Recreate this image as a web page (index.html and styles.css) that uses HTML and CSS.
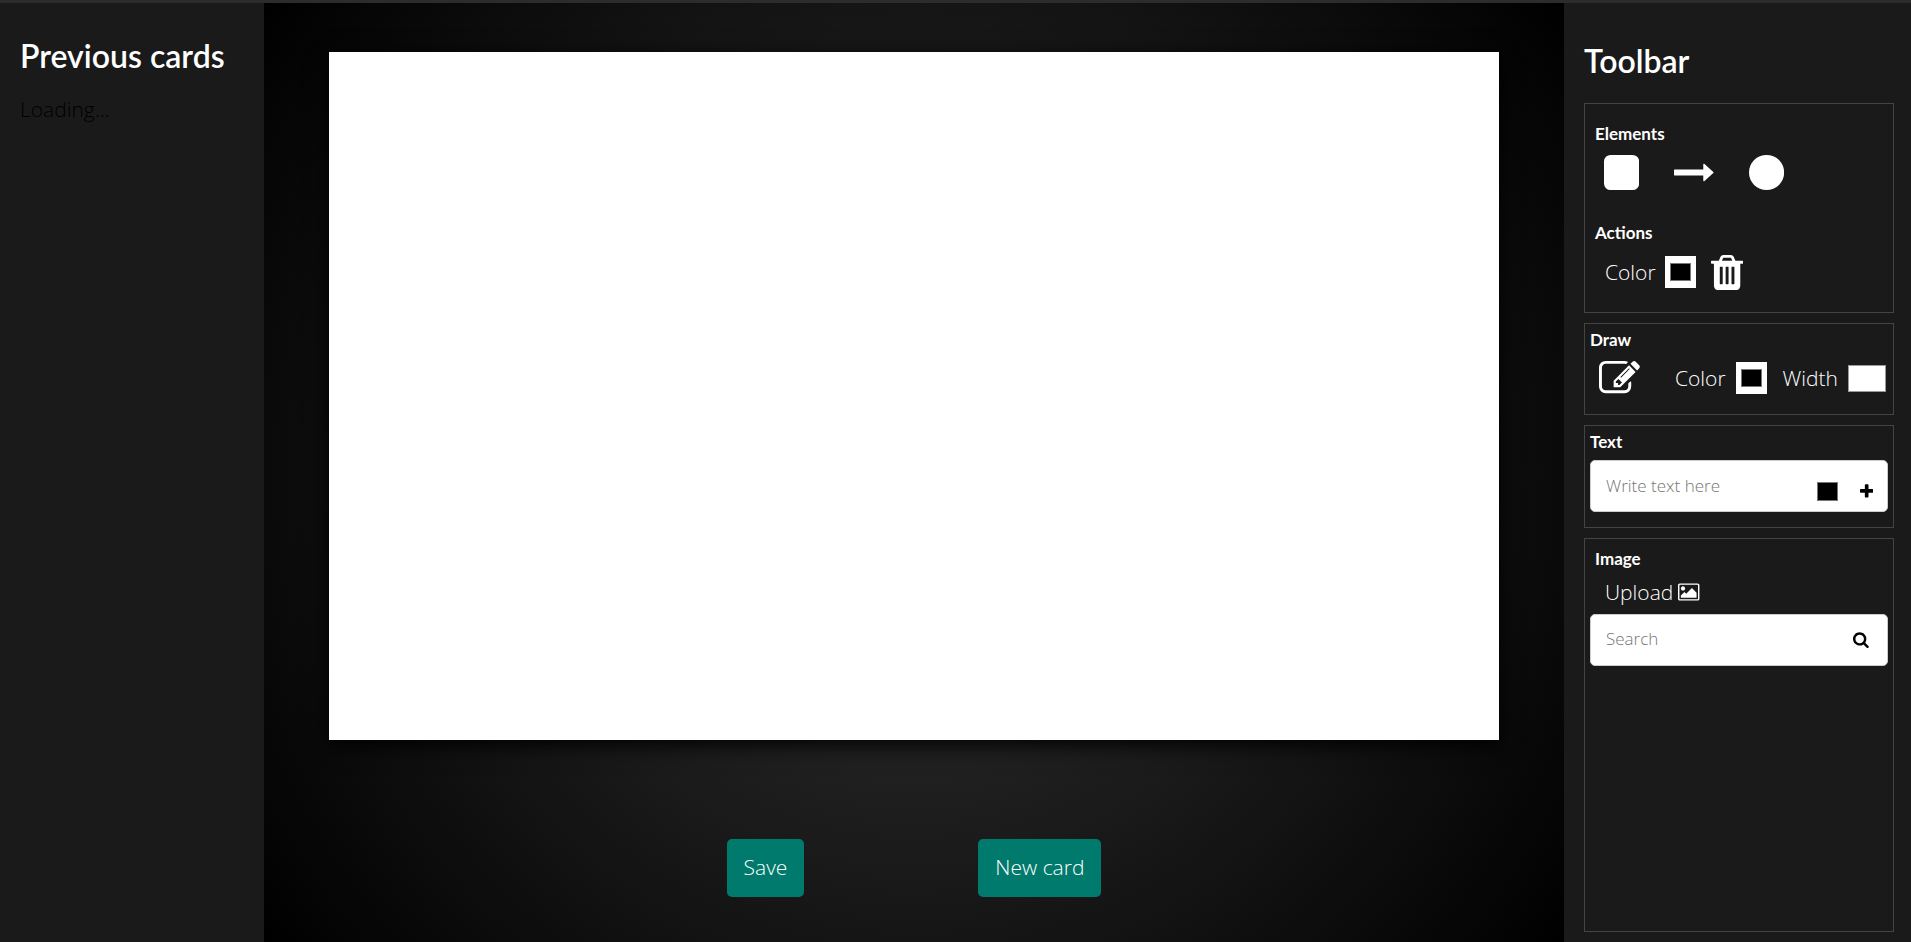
FILE: index.html
```
<!DOCTYPE html>
<html lang="en">
<head>
<meta charset="utf-8">
<title>Card editor</title>
<link rel="stylesheet" href="styles.css">
</head>
<body>
<div class="app">
  <aside class="previous">
    <h1 class="title">Previous cards</h1>
    <p class="loading">Loading...</p>
  </aside>

  <main class="stage">
    <canvas class="card"></canvas>
    <div class="stage-actions">
      <button class="btn" type="button">Save</button>
      <button class="btn" type="button">New card</button>
    </div>
  </main>

  <aside class="toolbar">
    <h1 class="title">Toolbar</h1>

    <section class="group group-elements">
      <h2 class="subtitle">Elements</h2>
      <div class="row row-elements">
        <button class="icon-btn" type="button" aria-label="Rectangle"><svg class="icon icon-lg" viewBox="128 0 1536 1792"><path d="M1664 416v960q0 119-84.500 203.500t-203.500 84.500h-960q-119 0-203.500-84.500t-84.500-203.500v-960q0-119 84.500-203.500t203.500-84.500h960q119 0 203.500 84.500t84.500 203.500z"/></svg></button>
        <button class="icon-btn" type="button" aria-label="Arrow"><svg class="icon icon-lg" viewBox="0 0 1728 1792"><path d="M1728 893q0 14-10 24l-384 354q-16 14-35 6-19-9-19-29v-224h-1248q-14 0-23-9t-9-23v-192q0-14 9-23t23-9h1248v-224q0-21 19-29t35 5l384 350q10 10 10 23z"/></svg></button>
        <button class="icon-btn" type="button" aria-label="Circle"><svg class="icon icon-lg" viewBox="128 0 1536 1792"><circle cx="896" cy="896" r="768"/></svg></button>
      </div>
      <h2 class="subtitle">Actions</h2>
      <div class="row row-actions">
        <label class="label" for="element-color">Color</label>
        <input class="swatch" id="element-color" type="color" value="#000000">
        <button class="icon-btn" type="button" aria-label="Delete"><svg class="icon icon-lg" viewBox="192 0 1408 1792"><path d="M704 1376v-704q0-14-9-23t-23-9h-64q-14 0-23 9t-9 23v704q0 14 9 23t23 9h64q14 0 23-9t9-23zm256 0v-704q0-14-9-23t-23-9h-64q-14 0-23 9t-9 23v704q0 14 9 23t23 9h64q14 0 23-9t9-23zm256 0v-704q0-14-9-23t-23-9h-64q-14 0-23 9t-9 23v704q0 14 9 23t23 9h64q14 0 23-9t9-23zm-544-992h448l-48-117q-7-9-17-11h-317q-10 2-17 11zm928 32v64q0 14-9 23t-23 9h-96v948q0 83-47 143.500t-113 60.500h-832q-66 0-113-58.500t-47-141.500v-952h-96q-14 0-23-9t-9-23v-64q0-14 9-23t23-9h309l70-167q15-37 54-63t79-26h320q40 0 79 26t54 63l70 167h309q14 0 23 9t9 23z"/></svg></button>
      </div>
    </section>

    <section class="group group-draw">
      <h2 class="subtitle">Draw</h2>
      <div class="row row-draw">
        <button class="icon-btn pencil" type="button" aria-label="Draw freely"><svg class="icon icon-lg" viewBox="0 0 1792 1792"><path d="M888 1184l116-116-152-152-116 116v56h96v96h56zm440-720q-16-16-33 1l-350 350q-17 17-1 33t33-1l350-350q17-17 1-33zm80 594v190q0 119-84.500 203.500t-203.500 84.500h-832q-119 0-203.500-84.500t-84.500-203.500v-832q0-119 84.500-203.500t203.500-84.500h832q63 0 117 25 15 7 18 23 3 17-9 29l-49 49q-14 14-32 8-23-6-45-6h-832q-66 0-113 47t-47 113v832q0 66 47 113t113 47h832q66 0 113-47t47-113v-126q0-13 9-22l64-64q15-15 35-7t20 29zm-96-738l288 288-672 672h-288v-288zm444 132l-92 92-288-288 92-92q28-28 68-28t68 28l152 152q28 28 28 68t-28 68z"/></svg></button>
        <label class="label" for="line-color">Color</label>
        <input class="swatch" id="line-color" type="color" value="#000000">
        <label class="label" for="line-width">Width</label>
        <input class="width-input" id="line-width" type="text" inputmode="numeric">
      </div>
    </section>

    <section class="group group-text">
      <h2 class="subtitle">Text</h2>
      <div class="field">
        <input class="field-input" type="text" placeholder="Write text here" aria-label="Text">
        <input class="swatch swatch-bare" type="color" value="#000000" aria-label="Text color">
        <button class="icon-btn icon-dark" type="button" aria-label="Add text"><svg class="icon icon-sm" viewBox="192 0 1408 1792"><path d="M1600 736v192q0 40-28 68t-68 28h-416v416q0 40-28 68t-68 28h-192q-40 0-68-28t-28-68v-416h-416q-40 0-68-28t-28-68v-192q0-40 28-68t68-28h416v-416q0-40 28-68t68-28h192q40 0 68 28t28 68v416h416q40 0 68 28t28 68z"/></svg></button>
      </div>
    </section>

    <section class="group group-image">
      <h2 class="subtitle">Image</h2>
      <button class="upload" type="button">Upload <svg class="icon icon-md" viewBox="-64 0 1920 1792"><path d="M576 576q0 80-56 136t-136 56-136-56-56-136 56-136 136-56 136 56 56 136zm1024 384v448h-1408v-192l320-320 160 160 512-512zm96-704h-1600q-13 0-22.500 9.500t-9.500 22.500v1216q0 13 9.500 22.500t22.500 9.500h1600q13 0 22.500-9.500t9.500-22.500v-1216q0-13-9.500-22.500t-22.500-9.500zm160 32v1216q0 66-47 113t-113 47h-1600q-66 0-113-47t-47-113v-1216q0-66 47-113t113-47h1600q66 0 113 47t47 113z"/></svg></button>
      <div class="field field-search">
        <input class="field-input" type="search" placeholder="Search" aria-label="Search images">
        <button class="icon-btn icon-dark" type="button" aria-label="Search"><svg class="icon icon-sm" viewBox="64 0 1664 1792"><path d="M1216 832q0-185-131.500-316.500t-316.500-131.500-316.500 131.500-131.500 316.500 131.500 316.500 316.500 131.500 316.500-131.500 131.500-316.500zm512 832q0 52-38 90t-90 38q-54 0-90-38l-343-342q-179 124-399 124-143 0-273.500-55.500t-225-150-150-225-55.500-273.500 55.500-273.500 150-225 225-150 273.500-55.500 273.500 55.500 225 150 150 225 55.500 273.500q0 220-124 399l343 343q37 37 37 90z"/></svg></button>
      </div>
    </section>
  </aside>
</div>
</body>
</html>
```

FILE: styles.css
```
* {
  box-sizing: border-box;
}

body {
  margin: 0;
  font-family: "Open Sans", "Noto Sans", sans-serif;
  font-size: 21px;
  font-weight: 300;
  line-height: 30px;
  color: #000;
}

button,
input {
  font: inherit;
}

.app {
  display: grid;
  grid-template-columns: 264px 1fr 347px;
  min-height: 100vh;
  border-top: 3px solid #2c2c2f;
}

.previous,
.toolbar {
  background: #1a1a1a;
}

.previous {
  padding: 31px 20px;
}

.title {
  margin: 0;
  font-family: Lato, "Open Sans", sans-serif;
  font-size: 32px;
  font-weight: 600;
  line-height: 44px;
  color: #fff;
  white-space: nowrap;
}

.loading {
  margin: 16px 0 0;
}

.stage {
  display: flex;
  flex-direction: column;
  align-items: center;
  padding: 49px 0 45px;
  background: radial-gradient(circle, #333, #000);
}

.card {
  width: 90%;
  flex: 1;
  min-height: 0;
  background: #fff;
  box-shadow: 0 5px 20px #000;
}

.stage-actions {
  display: flex;
  justify-content: center;
  gap: 174px;
  margin-top: 99px;
}

.btn {
  height: 58px;
  padding: 0 17px 2px;
  border: 0;
  border-radius: 5px;
  background: #007a6c;
  color: #fff;
}

.toolbar {
  display: flex;
  flex-direction: column;
  gap: 10px;
  padding: 36px 17px 10px 20px;
}

.toolbar .title {
  margin-bottom: 10px;
}

.group {
  padding: 5px;
  border: 1px solid #444;
}

.subtitle {
  margin: 0;
  font-family: Lato, "Open Sans", sans-serif;
  font-size: 17px;
  font-weight: 700;
  line-height: 22px;
  color: #fff;
}

.row {
  display: flex;
  align-items: center;
}

.group-elements {
  height: 210px;
  padding: 19px 10px;
}

.row-elements {
  gap: 35px;
  height: 54px;
  margin-bottom: 23px;
  padding-left: 9px;
}

.row-actions {
  height: 56px;
  padding-left: 10px;
}

.row-actions .swatch {
  margin: 0 15px 0 9px;
}

.group-draw {
  height: 92px;
}

.row-draw {
  height: 54px;
  padding: 0 2px 0 9px;
}

.row-draw .swatch {
  margin: 0 16px 0 10px;
}

.pencil {
  margin-right: auto;
}

.width-input {
  width: 38px;
  height: 27px;
  margin-left: 10px;
  padding: 0 4px;
  border: 1px solid #999;
  background: #fff;
}

.label {
  color: #fff;
}

.icon-btn {
  display: flex;
  padding: 0;
  border: 0;
  background: none;
  color: #fff;
}

.icon-dark {
  color: #000;
}

.icon {
  display: block;
  fill: currentColor;
}

.icon-lg {
  height: 41px;
}

.icon-md {
  height: 20px;
}

.icon-sm {
  height: 17px;
}

.swatch {
  width: 31px;
  height: 32px;
  padding: 7px 5px;
  border: 0;
  background: #fff;
  appearance: none;
}

.swatch::-webkit-color-swatch-wrapper {
  padding: 0;
}

.swatch::-webkit-color-swatch {
  border: 1px solid #777;
  border-radius: 0;
}

.swatch-bare {
  height: 33px;
}

.group-text {
  height: 103px;
}

.field {
  display: flex;
  align-items: center;
  height: 52px;
  border: 1px solid #ccc;
  border-radius: 5px;
  background: #fff;
}

.group-text .field {
  margin-top: 7px;
  padding: 10px 14px 0 0;
}

.group-text .field-input {
  margin-top: -10px;
}

.group-text .swatch {
  margin-right: 17px;
}

.field-search {
  padding: 0 18px 2px 0;
}

.field-input {
  flex: 1;
  min-width: 0;
  padding: 0 0 0 15px;
  border: 0;
  outline: 0;
  background: none;
  font-size: 17px;
  color: #000;
}

.field-input::placeholder {
  color: #757575;
  opacity: 1;
}

.group-image {
  flex: 1;
  padding-top: 9px;
}

.group-image .subtitle {
  padding-left: 5px;
}

.upload {
  display: flex;
  align-items: center;
  gap: 5px;
  height: 44px;
  padding: 0 0 0 15px;
  border: 0;
  background: none;
  color: #fff;
}
```
